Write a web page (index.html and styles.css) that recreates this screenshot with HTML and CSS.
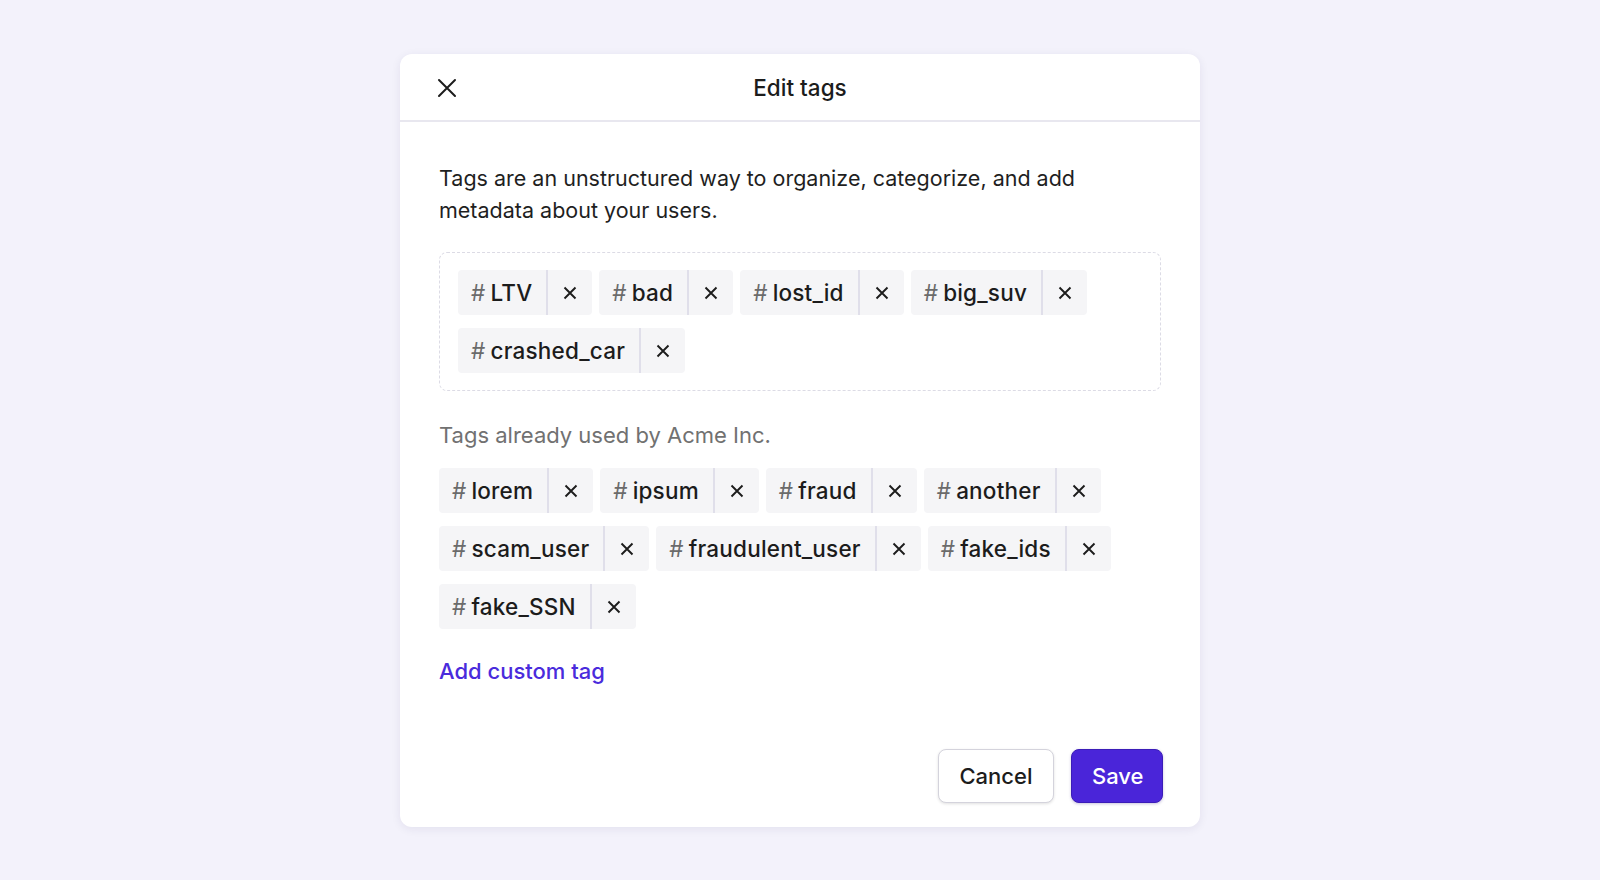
FILE: index.html
```html
<!DOCTYPE html>
<html lang="en">
<head>
<meta charset="utf-8">
<title>Edit tags</title>
<link rel="stylesheet" href="styles.css">
</head>
<body>
<div class="modal">
  <div class="modal-header">
    <button class="close-btn" aria-label="Close">
      <svg width="20" height="20" viewBox="0 0 20 20"><path d="M2 2 L18 18 M18 2 L2 18" stroke="#1c1c1c" stroke-width="2" stroke-linecap="round" fill="none"/></svg>
    </button>
    <h1 class="title">Edit tags</h1>
  </div>
  <div class="modal-body">
    <p class="desc">Tags are an unstructured way to organize, categorize, and add metadata about your users.</p>
    <div class="tag-box">
      <div class="tag-list">
        <span class="tag"><span class="tag-label"><span class="hash">#</span>LTV</span><span class="tag-x"><svg width="14" height="14" viewBox="0 0 14 14"><path d="M1.5 1.5 L12.5 12.5 M12.5 1.5 L1.5 12.5" stroke="#1c1c1c" stroke-width="1.9" fill="none"/></svg></span></span>
        <span class="tag"><span class="tag-label"><span class="hash">#</span>bad</span><span class="tag-x"><svg width="14" height="14" viewBox="0 0 14 14"><path d="M1.5 1.5 L12.5 12.5 M12.5 1.5 L1.5 12.5" stroke="#1c1c1c" stroke-width="1.9" fill="none"/></svg></span></span>
        <span class="tag"><span class="tag-label"><span class="hash">#</span>lost_id</span><span class="tag-x"><svg width="14" height="14" viewBox="0 0 14 14"><path d="M1.5 1.5 L12.5 12.5 M12.5 1.5 L1.5 12.5" stroke="#1c1c1c" stroke-width="1.9" fill="none"/></svg></span></span>
        <span class="tag"><span class="tag-label"><span class="hash">#</span>big_suv</span><span class="tag-x"><svg width="14" height="14" viewBox="0 0 14 14"><path d="M1.5 1.5 L12.5 12.5 M12.5 1.5 L1.5 12.5" stroke="#1c1c1c" stroke-width="1.9" fill="none"/></svg></span></span>
        <span class="tag"><span class="tag-label"><span class="hash">#</span>crashed_car</span><span class="tag-x"><svg width="14" height="14" viewBox="0 0 14 14"><path d="M1.5 1.5 L12.5 12.5 M12.5 1.5 L1.5 12.5" stroke="#1c1c1c" stroke-width="1.9" fill="none"/></svg></span></span>
      </div>
    </div>
    <p class="used-label">Tags already used by Acme Inc.</p>
    <div class="tag-list">
      <span class="tag"><span class="tag-label"><span class="hash">#</span>lorem</span><span class="tag-x"><svg width="14" height="14" viewBox="0 0 14 14"><path d="M1.5 1.5 L12.5 12.5 M12.5 1.5 L1.5 12.5" stroke="#1c1c1c" stroke-width="1.9" fill="none"/></svg></span></span>
      <span class="tag"><span class="tag-label"><span class="hash">#</span>ipsum</span><span class="tag-x"><svg width="14" height="14" viewBox="0 0 14 14"><path d="M1.5 1.5 L12.5 12.5 M12.5 1.5 L1.5 12.5" stroke="#1c1c1c" stroke-width="1.9" fill="none"/></svg></span></span>
      <span class="tag"><span class="tag-label"><span class="hash">#</span>fraud</span><span class="tag-x"><svg width="14" height="14" viewBox="0 0 14 14"><path d="M1.5 1.5 L12.5 12.5 M12.5 1.5 L1.5 12.5" stroke="#1c1c1c" stroke-width="1.9" fill="none"/></svg></span></span>
      <span class="tag"><span class="tag-label"><span class="hash">#</span>another</span><span class="tag-x"><svg width="14" height="14" viewBox="0 0 14 14"><path d="M1.5 1.5 L12.5 12.5 M12.5 1.5 L1.5 12.5" stroke="#1c1c1c" stroke-width="1.9" fill="none"/></svg></span></span>
      <span class="tag"><span class="tag-label"><span class="hash">#</span>scam_user</span><span class="tag-x"><svg width="14" height="14" viewBox="0 0 14 14"><path d="M1.5 1.5 L12.5 12.5 M12.5 1.5 L1.5 12.5" stroke="#1c1c1c" stroke-width="1.9" fill="none"/></svg></span></span>
      <span class="tag"><span class="tag-label"><span class="hash">#</span>fraudulent_user</span><span class="tag-x"><svg width="14" height="14" viewBox="0 0 14 14"><path d="M1.5 1.5 L12.5 12.5 M12.5 1.5 L1.5 12.5" stroke="#1c1c1c" stroke-width="1.9" fill="none"/></svg></span></span>
      <span class="tag"><span class="tag-label"><span class="hash">#</span>fake_ids</span><span class="tag-x"><svg width="14" height="14" viewBox="0 0 14 14"><path d="M1.5 1.5 L12.5 12.5 M12.5 1.5 L1.5 12.5" stroke="#1c1c1c" stroke-width="1.9" fill="none"/></svg></span></span>
      <span class="tag"><span class="tag-label"><span class="hash">#</span>fake_SSN</span><span class="tag-x"><svg width="14" height="14" viewBox="0 0 14 14"><path d="M1.5 1.5 L12.5 12.5 M12.5 1.5 L1.5 12.5" stroke="#1c1c1c" stroke-width="1.9" fill="none"/></svg></span></span>
    </div>
    <a class="add-link" href="#">Add custom tag</a>
  </div>
  <div class="modal-footer">
    <button class="btn btn-cancel">Cancel</button>
    <button class="btn btn-save">Save</button>
  </div>
</div>
</body>
</html>
```
FILE: styles.css
```css
* { box-sizing: border-box; }
html, body { margin: 0; padding: 0; }
body {
  background: #f3f2fb;
  font-family: "Inter", "Noto Sans", sans-serif;
  color: #1c1c1c;
  height: 880px;
  overflow: hidden;
}
.modal {
  width: 800px;
  margin: 54px auto 0;
  background: #ffffff;
  border-radius: 12px;
  box-shadow: 0 2px 10px rgba(40, 30, 90, 0.08);
}
.modal-header {
  position: relative;
  height: 68px;
  border-bottom: 2px solid #e8e7ef;
  display: flex;
  align-items: center;
  justify-content: center;
}
.close-btn {
  position: absolute;
  left: 37px;
  top: 24px;
  background: none;
  border: 0;
  padding: 0;
  width: 20px;
  height: 20px;
  display: flex;
}
.title {
  margin: 0;
  font-size: 22.5px;
  font-weight: 500;
}
.modal-body {
  padding: 40px 39px 0;
}
.desc {
  margin: 0;
  max-width: 680px;
  font-size: 21.5px;
  line-height: 32px;
  color: #1f1f1f;
}
.tag-box {
  margin-top: 26px;
  border: 1.5px dashed #dcdbe5;
  border-radius: 8px;
  padding: 17px 18px;
}
.tag-list {
  display: flex;
  flex-wrap: wrap;
  column-gap: 7px;
  row-gap: 13px;
}
.tag {
  display: inline-flex;
  height: 45px;
  background: #f5f5f7;
  border-radius: 4px;
  font-size: 22.5px;
  font-weight: 500;
  letter-spacing: 0.2px;
}
.tag-label {
  display: flex;
  align-items: center;
  padding: 0 14px 0 13px;
  border-right: 2px solid #e0dfea;
}
.hash {
  color: #6b6b6b;
  margin-right: 5px;
  font-weight: 400;
}
.tag-x {
  width: 44px;
  display: flex;
  align-items: center;
  justify-content: center;
}
.used-label {
  margin: 29px 0 18px;
  font-size: 22px;
  line-height: 30px;
  color: #717171;
}
.add-link {
  display: block;
  margin-top: 27px;
  font-size: 22px;
  line-height: 30px;
  color: #4a2bdc;
  text-decoration: none;
  font-weight: 500;
}
.modal-footer {
  display: flex;
  justify-content: flex-end;
  gap: 17px;
  padding: 63px 37px 24px;
}
.btn {
  height: 54px;
  border-radius: 8px;
  font-family: inherit;
  font-size: 22px;
  font-weight: 500;
  padding: 0 20px;
}
.btn-cancel {
  width: 116px;
  background: #ffffff;
  color: #1c1c1c;
  border: 1.5px solid #d4d3dc;
  box-shadow: 0 1px 3px rgba(0, 0, 0, 0.12);
}
.btn-save {
  width: 92px;
  background: #4a25d9;
  color: #ffffff;
  border: 1.5px solid #3b1db8;
  box-shadow: 0 1px 3px rgba(40, 20, 120, 0.25);
}
```
